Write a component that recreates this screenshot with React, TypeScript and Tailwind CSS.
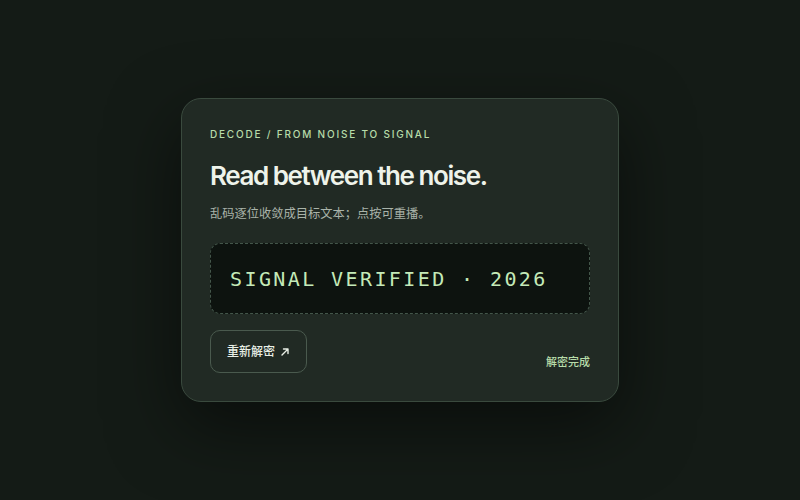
export default function App() {
  const sans = { fontFamily: 'Inter, "Noto Sans CJK SC", sans-serif' };
  return (
    <div className="flex h-[500px] w-full items-center justify-center bg-[#141b16]" style={sans}>
      <div className="w-[438px] rounded-[20px] border border-[#3a4a3e] bg-[#212a24] px-7 pb-7 pt-7 shadow-[0_24px_70px_rgba(0,0,0,0.5)]">
        <div className="text-[10px] font-medium leading-[14px] tracking-[0.18em] text-[#b7dca9]">
          DECODE / FROM NOISE TO SIGNAL
        </div>
        <h1 className="mt-[19px] text-[26px] font-semibold leading-[32px] tracking-[-0.055em] text-[#eef3ea]">
          Read between the noise.
        </h1>
        <p className="mt-[12px] text-[12.25px] leading-5 text-[#a9b3a9]">乱码逐位收敛成目标文本；点按可重播。</p>
        <div className="mt-[19px] flex h-[71px] items-center rounded-[10px] border border-dashed border-[#43564a] bg-[#0d130f] px-[19px]">
          <span
            className="text-[20px] leading-none tracking-[0.12em] text-[#c4eab8]"
            style={{ fontFamily: '"DejaVu Sans Mono", monospace' }}
          >
            SIGNAL VERIFIED · 2026
          </span>
        </div>
        <div className="mt-4 flex items-end justify-between">
          <button className="flex h-[43px] items-center gap-[5px] rounded-[10px] border border-[#4a5a4e] px-[16px] text-[12px] font-medium text-[#e9efe6]">
            重新解密
            <svg width="10" height="10" viewBox="0 0 10 10" fill="none" stroke="currentColor" strokeWidth="1.4" strokeLinecap="round" strokeLinejoin="round">
              <path d="M2 8 L8 2 M3.5 2 H8 V6.5" />
            </svg>
          </button>
          <span className="mb-[3px] text-[11px] font-medium text-[#b7dca9]">解密完成</span>
        </div>
      </div>
    </div>
  );
}
